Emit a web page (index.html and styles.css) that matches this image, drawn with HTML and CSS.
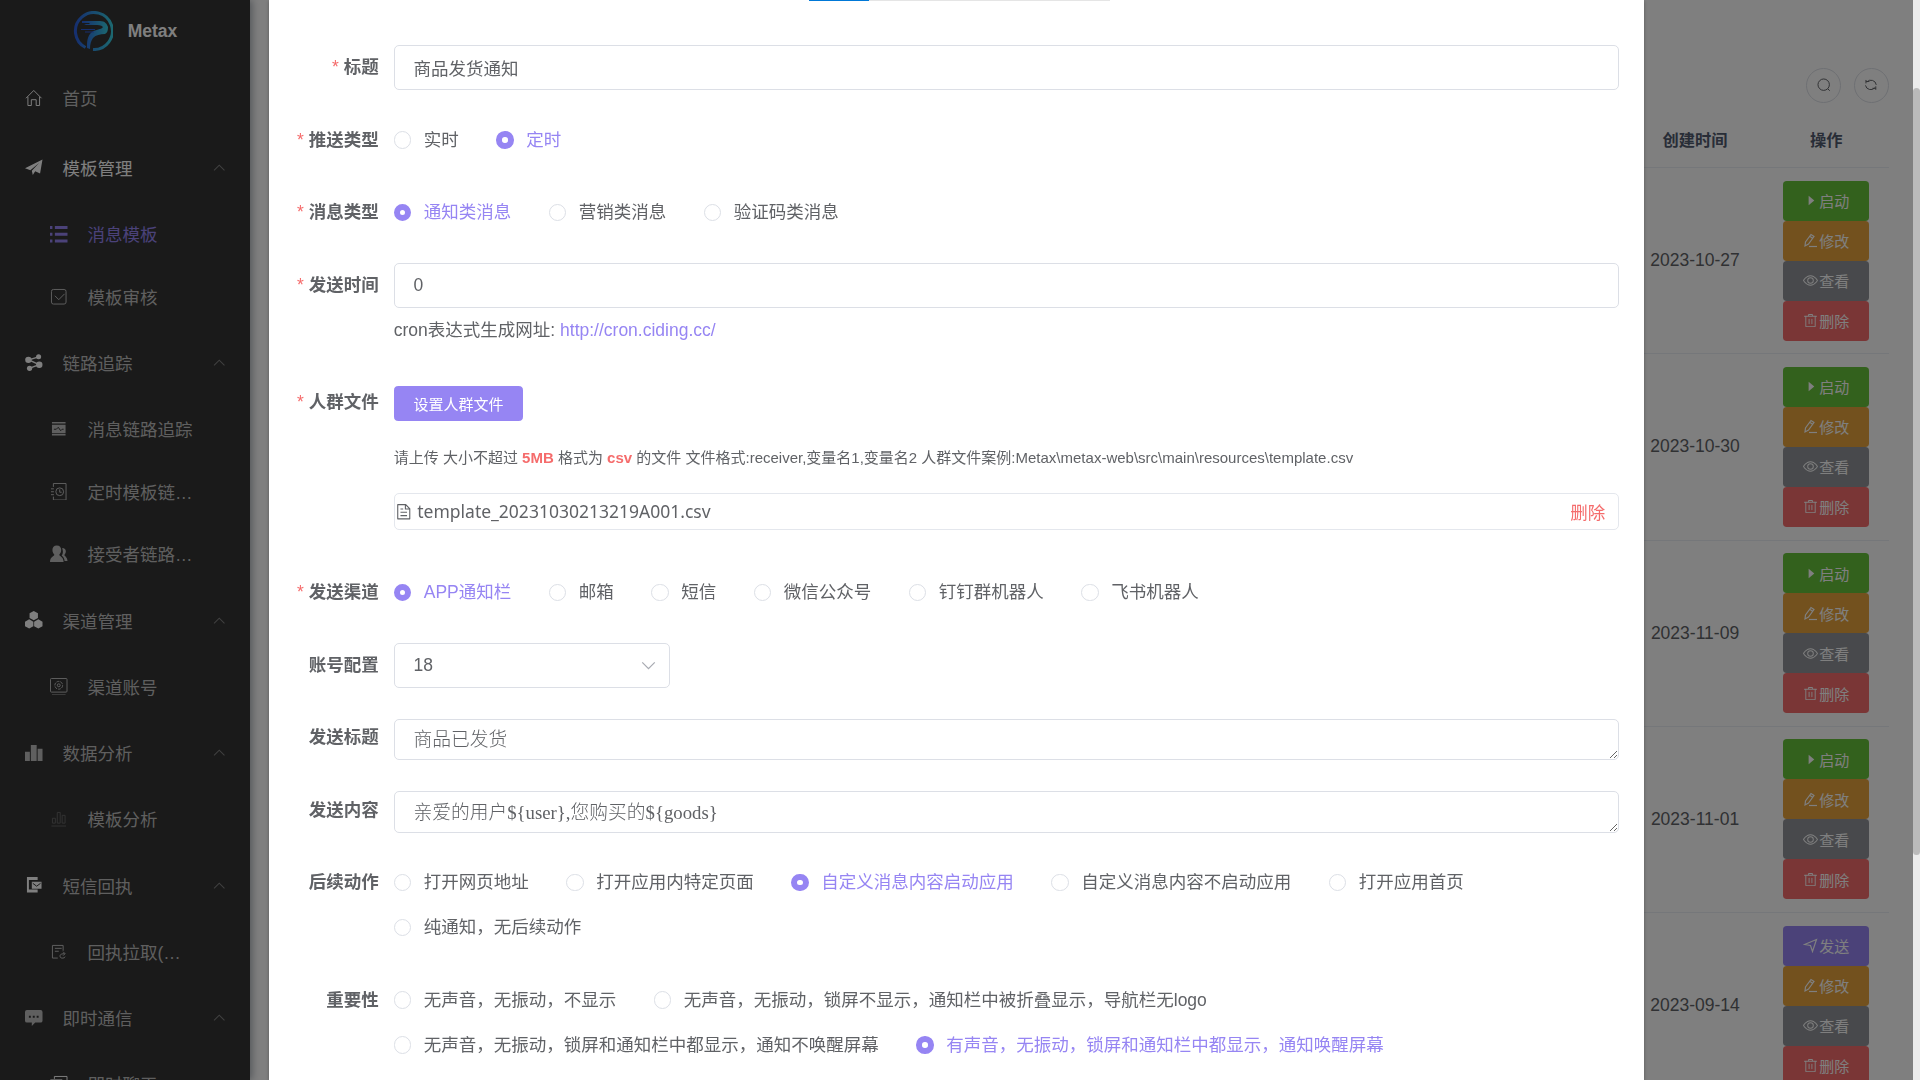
FILE: index.html
```html
<!DOCTYPE html>
<html lang="zh-CN">
<head>
<meta charset="utf-8">
<title>Metax</title>
<link rel="stylesheet" href="styles.css">
</head>
<body>
<svg class="sprite" aria-hidden="true">
  <symbol id="i-up" viewBox="0 0 12 12"><path d="M1 9l5-5 5 5" fill="none" stroke="currentColor"/></symbol>
  <symbol id="i-down" viewBox="0 0 12 12"><path d="M1 3.500l5 5 5-5" fill="none" stroke="currentColor"/></symbol>
  <symbol id="i-play" viewBox="0 0 1024 1024"><path fill="currentColor" d="M384 192v640l384-320.064z"/></symbol>
  <symbol id="i-edit" viewBox="0 0 15 15"><g fill="none" stroke="currentColor" stroke-width="1.200"><path d="M2 13l.5-4L8 1.500l3 2L5.500 11 2 13zM7 3.500l3 2"/><path d="M6 13.500h8"/></g></symbol>
  <symbol id="i-view" viewBox="0 0 1024 1024"><path fill="currentColor" d="M512 160c320 0 512 352 512 352S832 864 512 864 0 512 0 512s192-352 512-352zm0 64c-225 0-384 208-436 288 52 80 211 288 436 288 225 0 384-208 436-288-52-80-211-288-436-288zm0 64a224 224 0 1 1 0 448 224 224 0 0 1 0-448zm0 64a160 160 0 1 0 0 320 160 160 0 0 0 0-320z"/></symbol>
  <symbol id="i-del" viewBox="0 0 1024 1024"><path fill="currentColor" d="M160 256H96a32 32 0 0 1 0-64h256V95.900a32 32 0 0 1 32-32h256a32 32 0 0 1 32 32V192h256a32 32 0 1 1 0 64h-64v672a32 32 0 0 1-32 32H192a32 32 0 0 1-32-32V256zm448-64v-64H416v64h192zM224 896h576V256H224v640zm192-128a32 32 0 0 1-32-32V416a32 32 0 0 1 64 0v320a32 32 0 0 1-32 32zm192 0a32 32 0 0 1-32-32V416a32 32 0 0 1 64 0v320a32 32 0 0 1-32 32z"/></symbol>
  <symbol id="i-send" viewBox="0 0 15 15"><path d="M1.500 6.500L13.500 1.500 9.500 13.500 7.500 7.500z" fill="none" stroke="currentColor" stroke-width="1.200"/></symbol>
  <symbol id="i-doc" viewBox="0 0 1024 1024"><path fill="currentColor" d="M832 384H576V128H192v768h640V384zm-26.500-64L640 154.500V320h165.500zM160 64h480l256 256v608a32 32 0 0 1-32 32H160a32 32 0 0 1-32-32V96a32 32 0 0 1 32-32zm160 448h384v64H320v-64zm0-192h160v64H320v-64zm0 384h384v64H320v-64z"/></symbol>
</svg>

<div class="app">
  <aside class="sidebar">
    <div class="brand">
      <svg class="brand-logo" viewBox="0 0 40 40">
        <defs><linearGradient id="lg" x1="0" y1="0" x2="1" y2="0"><stop offset="0" stop-color="#2c5fe0"/><stop offset="1" stop-color="#38cfe0"/></linearGradient></defs>
        <path d="M12.500 36.500A18.500 18.500 0 1 1 20 38.500" fill="none" stroke="url(#lg)" stroke-width="3"/>
        <path d="M9 10h18c5 0 7 3 8 6 0 4-1 6-3 7-5 0-9 1-12 4-2 3-3 6-3 11l-3-1c0-6 0-12 5-16 4-3 9-2 11-5-2-2-5-2-8-2h-9l-2-1h6l-1-1H9z" fill="url(#lg)"/>
        <path d="M8 18.500h14M12 21h9" stroke="#2c5fe0"/>
      </svg>
      <span>Metax</span>
    </div>
    <nav>
      <a class="item bright-icon" href="#"><svg viewBox="0 0 18 18"><path d="M1 9.500l8-8 8 8M3 8v9h3.500v-6h5v6H15V8" fill="none" stroke="currentColor"/></svg><span>首页</span></a>
      <a class="item open" href="#"><svg viewBox="0 0 18 18"><path d="M0 9.500L18 .5 15.500 15l-5-2.500L8 16.500 7 12 14.500 4 5.500 11.500z" fill="currentColor"/></svg><span>模板管理</span><svg class="arrow"><use href="#i-up"/></svg></a>
      <a class="item sub active" href="#"><svg viewBox="0 0 18 18"><path d="M0 1h2.500v3H0zM5 1h13v3H5zM0 8h2.500v3H0zM5 8h13v3H5zM0 15h2.500v3H0zM5 15h13v3H5z" fill="currentColor"/></svg><span>消息模板</span></a>
      <a class="item sub" href="#"><svg viewBox="0 0 18 18"><g fill="none" stroke="currentColor"><rect x="1.500" y="1.500" width="15" height="15" rx="2"/><path d="M5 8l4 4 6-6"/></g></svg><span>模板审核</span></a>

      <a class="item bright-icon" href="#"><svg viewBox="0 0 18 18"><g fill="currentColor"><circle cx="3.500" cy="6" r="3.300"/><circle cx="14" cy="2.800" r="2.600"/><circle cx="14.700" cy="11" r="3.300"/><circle cx="4.700" cy="14.700" r="2.700"/></g><path d="M14 3L4 6l10.500 5L5 14.500" fill="none" stroke="currentColor" stroke-width="1.500"/></svg><span>链路追踪</span><svg class="arrow"><use href="#i-up"/></svg></a>
      <a class="item sub" href="#"><svg viewBox="0 0 18 18"><path d="M2 2h14v1.500H2zM2 5h14v8.500H2zM2 14.500h14V16H2z" fill="currentColor"/><path d="M4 9.500h2.500l2-2 2.500 3.500 1.500-1.500H14" fill="none" stroke="#333"/></svg><span>消息链路追踪</span></a>
      <a class="item sub" href="#"><svg viewBox="0 0 18 18"><g fill="none" stroke="currentColor"><path d="M3.500 4V.5h13v17h-13V14M1 6h3M1 9h3M1 12h3"/><circle cx="10" cy="9" r="4"/><path d="M10 6.500V9.500h2"/></g></svg><span>定时模板链…</span></a>
      <a class="item sub" href="#"><svg viewBox="0 0 18 18"><g fill="currentColor"><path d="M7 .5c3 0 4.500 2 4.500 4.500S10.500 9 9.500 10c0 1.500 4.500 2 4.500 7.500H0C0 12 4.500 11.500 4.500 10 3.500 9 2.500 7.500 2.500 5S4 .5 7 .5z"/><path d="M12.500 3c2.500 0 3.800 1.500 3.800 3.500s-1 3-1.500 3.800c0 1.200 3.200 2 3.200 6.200h-3c0-3-1.500-4.500-3-5.500 1-1.500 2-4 .5-8z"/></g></svg><span>接受者链路…</span></a>

      <a class="item bright-icon" href="#"><svg viewBox="0 0 18 18"><path d="M9 0l4.300 2.300v5L9 9.500 4.700 7.300v-5zM4.300 8.500L8.600 11v4.800L4.300 18 0 15.800V11zM13.700 8.500L18 11v4.800L13.700 18l-4.300-2.200V11z" fill="currentColor"/></svg><span>渠道管理</span><svg class="arrow"><use href="#i-up"/></svg></a>
      <a class="item sub" href="#"><svg viewBox="0 0 18 18"><g fill="none" stroke="currentColor"><rect x=".5" y=".5" width="17" height="14" rx="1"/><path d="M2 17.500h14"/><circle cx="9" cy="7.500" r="4" stroke-dasharray="3 1"/><circle cx="9" cy="7.500" r="1.500"/></g></svg><span>渠道账号</span></a>

      <a class="item" href="#"><svg viewBox="0 0 18 18"><path d="M0 8h5v10H0zM6 1h6v17H6zM13 5h5v13h-5z" fill="currentColor"/></svg><span>数据分析</span><svg class="arrow"><use href="#i-up"/></svg></a>
      <a class="item sub dim-icon" href="#"><svg viewBox="0 0 18 18"><path d="M2.500 8.500h3v5h-3zM7.500 2.500h3v11h-3zM12.500 5.500h3v8h-3zM1.500 16.500h15" fill="none" stroke="currentColor"/></svg><span>模板分析</span></a>

      <a class="item bright-icon" href="#"><svg viewBox="0 0 18 18"><path d="M2 1h11v3H4v10h9v3H2zM7 6h10v7H7z" fill="currentColor"/><path d="M8 7.500l4 3 4-3" fill="none" stroke="#333"/></svg><span>短信回执</span><svg class="arrow"><use href="#i-up"/></svg></a>
      <a class="item sub" href="#"><svg viewBox="0 0 18 18"><path d="M8 15.500H2.500v-13h11V8M5 5.500h7M5 8.500h4M13.500 9l2 2-2 2M15 11c-5 0-5 2-4.500 3.500s5 1.500 5-.5" fill="none" stroke="currentColor"/></svg><span>回执拉取(…</span></a>

      <a class="item" href="#"><svg viewBox="0 0 18 18"><path d="M2 1h14q2 0 2 2v9q0 2-2 2h-5.500L7 17.500V14H2q-2 0-2-2V3q0-2 2-2z" fill="currentColor"/><path d="M4 7h2v2H4zM8 7h2v2H8zM12 7h2v2h-2z" fill="#333"/></svg><span>即时通信</span><svg class="arrow"><use href="#i-up"/></svg></a>
      <a class="item sub bright-icon" href="#"><svg viewBox="0 0 18 18"><path d="M4.500 4V1.500h13v11H14M.5 5h12v11H.5z" fill="none" stroke="currentColor"/></svg><span>即时聊天</span></a>
    </nav>
  </aside>

  <main class="main">
    <div class="toolbar">
      <button class="round" type="button" aria-label="搜索"><svg viewBox="0 0 14 14"><g fill="none" stroke="currentColor"><circle cx="6.800" cy="6.800" r="5.800"/><path d="M11 11l2 2"/></g></svg></button>
      <button class="round" type="button" aria-label="刷新"><svg viewBox="0 0 14 14"><path d="M2 5.500V2M2 3.500h3.500M3 4a5.500 5.500 0 0 1 9.500 3M12 8.500V12M12 10.500H8.500M11 10A5.500 5.500 0 0 1 1.500 7.500" fill="none" stroke="currentColor"/></svg></button>
    </div>
    <table class="table">
      <colgroup><col class="col-date"><col class="col-ops"></colgroup>
      <thead><tr><th>创建时间</th><th>操作</th></tr></thead>
      <tbody>
        <tr><td>2023-10-27</td><td><div class="ops"><button class="op green" type="button"><svg><use href="#i-play"/></svg>启动</button><button class="op orange" type="button"><svg><use href="#i-edit"/></svg>修改</button><button class="op gray" type="button"><svg><use href="#i-view"/></svg>查看</button><button class="op red" type="button"><svg><use href="#i-del"/></svg>删除</button></div></td></tr>
        <tr><td>2023-10-30</td><td><div class="ops"><button class="op green" type="button"><svg><use href="#i-play"/></svg>启动</button><button class="op orange" type="button"><svg><use href="#i-edit"/></svg>修改</button><button class="op gray" type="button"><svg><use href="#i-view"/></svg>查看</button><button class="op red" type="button"><svg><use href="#i-del"/></svg>删除</button></div></td></tr>
        <tr><td>2023-11-09</td><td><div class="ops"><button class="op green" type="button"><svg><use href="#i-play"/></svg>启动</button><button class="op orange" type="button"><svg><use href="#i-edit"/></svg>修改</button><button class="op gray" type="button"><svg><use href="#i-view"/></svg>查看</button><button class="op red" type="button"><svg><use href="#i-del"/></svg>删除</button></div></td></tr>
        <tr><td>2023-11-01</td><td><div class="ops"><button class="op green" type="button"><svg><use href="#i-play"/></svg>启动</button><button class="op orange" type="button"><svg><use href="#i-edit"/></svg>修改</button><button class="op gray" type="button"><svg><use href="#i-view"/></svg>查看</button><button class="op red" type="button"><svg><use href="#i-del"/></svg>删除</button></div></td></tr>
        <tr><td>2023-09-14</td><td><div class="ops"><button class="op purple" type="button"><svg><use href="#i-send"/></svg>发送</button><button class="op orange" type="button"><svg><use href="#i-edit"/></svg>修改</button><button class="op gray" type="button"><svg><use href="#i-view"/></svg>查看</button><button class="op red" type="button"><svg><use href="#i-del"/></svg>删除</button></div></td></tr>
      </tbody>
    </table>
  </main>
</div>

<div class="overlay">
  <div class="overlay-body">
    <form class="dialog" role="dialog" aria-label="消息模板">
      <div class="progress"><div class="progress-track"><div class="progress-bar"></div></div></div>

      <div class="row">
        <label class="label required" for="title">标题</label>
        <div class="field"><input class="input" id="title" type="text" value="商品发货通知"></div>
      </div>
      <div class="row" role="radiogroup" aria-labelledby="l-push">
        <span class="label required" id="l-push">推送类型</span>
        <div class="field radios">
          <label class="radio"><input type="radio" name="push"><span>实时</span></label>
          <label class="radio"><input type="radio" name="push" checked><span>定时</span></label>
        </div>
      </div>
      <div class="row" role="radiogroup" aria-labelledby="l-msg">
        <span class="label required" id="l-msg">消息类型</span>
        <div class="field radios">
          <label class="radio"><input type="radio" name="msg" checked><span>通知类消息</span></label>
          <label class="radio"><input type="radio" name="msg"><span>营销类消息</span></label>
          <label class="radio"><input type="radio" name="msg"><span>验证码类消息</span></label>
        </div>
      </div>
      <div class="row">
        <label class="label required" for="time">发送时间</label>
        <div class="field">
          <input class="input" id="time" type="text" value="0">
          <div class="tip">cron表达式生成网址: <a href="http://cron.ciding.cc/">http://cron.ciding.cc/</a></div>
        </div>
      </div>
      <div class="row">
        <span class="label required">人群文件</span>
        <div class="field upload">
          <button class="primary" type="button">设置人群文件</button>
          <p class="hint">请上传 大小不超过 <b>5MB</b> 格式为 <b>csv</b> 的文件 文件格式:receiver,变量名1,变量名2 人群文件案例:Metax\metax-web\src\main\resources\template.csv</p>
          <div class="file"><svg><use href="#i-doc"/></svg><span class="file-name">template_20231030213219A001.csv</span><a class="file-del" href="#">删除</a></div>
        </div>
      </div>
      <div class="row" role="radiogroup" aria-labelledby="l-chan">
        <span class="label required" id="l-chan">发送渠道</span>
        <div class="field radios">
          <label class="radio"><input type="radio" name="chan" checked><span>APP通知栏</span></label>
          <label class="radio"><input type="radio" name="chan"><span>邮箱</span></label>
          <label class="radio"><input type="radio" name="chan"><span>短信</span></label>
          <label class="radio"><input type="radio" name="chan"><span>微信公众号</span></label>
          <label class="radio"><input type="radio" name="chan"><span>钉钉群机器人</span></label>
          <label class="radio"><input type="radio" name="chan"><span>飞书机器人</span></label>
        </div>
      </div>
      <div class="row">
        <label class="label" for="account">账号配置</label>
        <div class="field"><div class="select"><select class="input" id="account"><option>18</option></select><svg><use href="#i-down"/></svg></div></div>
      </div>
      <div class="row">
        <label class="label" for="send-title">发送标题</label>
        <div class="field area"><textarea id="send-title" rows="1">商品已发货</textarea></div>
      </div>
      <div class="row">
        <label class="label" for="send-body">发送内容</label>
        <div class="field area"><textarea id="send-body" rows="1">亲爱的用户${user},您购买的${goods}</textarea></div>
      </div>
      <div class="row" role="radiogroup" aria-labelledby="l-act">
        <span class="label" id="l-act">后续动作</span>
        <div class="field radios">
          <label class="radio"><input type="radio" name="act"><span>打开网页地址</span></label>
          <label class="radio"><input type="radio" name="act"><span>打开应用内特定页面</span></label>
          <label class="radio"><input type="radio" name="act" checked><span>自定义消息内容启动应用</span></label>
          <label class="radio"><input type="radio" name="act"><span>自定义消息内容不启动应用</span></label>
          <label class="radio"><input type="radio" name="act"><span>打开应用首页</span></label>
          <label class="radio"><input type="radio" name="act"><span>纯通知，无后续动作</span></label>
        </div>
      </div>
      <div class="row" role="radiogroup" aria-labelledby="l-imp">
        <span class="label" id="l-imp">重要性</span>
        <div class="field radios">
          <label class="radio"><input type="radio" name="imp"><span>无声音，无振动，不显示</span></label>
          <label class="radio"><input type="radio" name="imp"><span>无声音，无振动，锁屏不显示，通知栏中被折叠显示，导航栏无logo</span></label>
          <label class="radio"><input type="radio" name="imp"><span>无声音，无振动，锁屏和通知栏中都显示，通知不唤醒屏幕</span></label>
          <label class="radio"><input type="radio" name="imp" checked><span>有声音，无振动，锁屏和通知栏中都显示，通知唤醒屏幕</span></label>
        </div>
      </div>
    </form>
  </div>
  <div class="scrollbar"><div class="thumb"></div></div>
</div>
</body>
</html>
```

FILE: styles.css
```css
:root {
  --primary: #9685f3;
  --text: #606266;
  --line: #dcdfe6;
  --danger: #f56c6c;
}

* { box-sizing: border-box; }

html { height: 100%; overflow: hidden; }

body {
  zoom: 1.25;
  height: 100%;
  margin: 0;
  overflow: hidden;
  font-family: "Liberation Sans", "Noto Sans CJK SC", sans-serif;
  font-size: 14px;
  color: var(--text);
  background: #fff;
}

button, input, select { font: inherit; }
a { color: inherit; text-decoration: none; }
svg { display: block; flex: none; }
.sprite { display: none; }

/* page behind the dialog */
.app { display: flex; height: 100%; overflow: hidden; }

.sidebar {
  flex: none;
  width: 200px;
  overflow: hidden;
  background: #343434;
  color: #bfbfbf;
  box-shadow: 2px 0 6px rgba(0, 21, 41, .35);
}

.brand {
  display: flex;
  align-items: center;
  justify-content: center;
  gap: 12px;
  height: 50px;
  color: #fff;
  font-weight: bold;
}
.brand-logo { width: 32px; height: 32px; }

.item {
  display: flex;
  align-items: center;
  gap: 16px;
  height: 56px;
  padding: 0 20px;
}
.item svg { width: 14px; height: 14px; }
.item .arrow { width: 10px; height: 10px; margin-left: auto; color: #808080; }
.item.open { color: #fff; }
.item.sub { height: 50px; padding-left: 40px; }
.item.active { color: var(--primary); }
.item.bright-icon svg:first-child { color: #fff; }
.item.dim-icon svg { color: #666; }

.main { flex: 1; padding: 54px 25px 0 20px; }

.toolbar { display: flex; justify-content: flex-end; gap: 10px; margin-bottom: 6px; }
.round {
  display: grid;
  place-items: center;
  width: 28px;
  height: 28px;
  padding: 0;
  border: 1px solid var(--line);
  border-radius: 50%;
  background: #fff;
  color: var(--text);
}
.round svg { width: 11px; height: 11px; }

.table { margin-left: auto; border-collapse: collapse; table-layout: fixed; width: 210px; text-align: center; }
.col-date { width: 110px; }
.col-ops { width: 100px; }
.table th { height: 46px; padding: 0; border-bottom: 1px solid #ebeef5; font-size: 13px; color: #515a6e; }
.table td { height: 149px; padding: 0; border-bottom: 1px solid #ebeef5; }

.ops { display: flex; flex-direction: column; align-items: center; }
.op {
  display: flex;
  align-items: center;
  justify-content: center;
  gap: 1px;
  height: 32px;
  padding: 0 15px;
  border: 1px solid transparent;
  border-radius: 3px;
  color: #fff;
  font-size: 12px;
}
.op svg { width: 12px; height: 12px; }
.green { background: #67c23a; }
.orange { background: #e6a23c; }
.gray { background: #909399; }
.red { background: #f56c6c; }
.purple { background: var(--primary); }

/* dialog */
.overlay { position: fixed; inset: 0; display: flex; overflow: hidden; background: rgba(0, 0, 0, .5); }
.overlay-body { flex: 1; overflow: hidden; }
.dialog {
  width: 1100px;
  max-width: 100%;
  min-height: 100%;
  margin: 0 auto;
  padding: 0 20px;
  background: #fff;
  box-shadow: 0 1px 3px rgba(0, 0, 0, .3);
}

.progress { display: flex; justify-content: center; padding: 0 0 35px 5px; }
.progress-track { width: 241px; height: 1px; background: #e5e5e5; }
.progress-bar { width: 20%; height: 1px; background: #0078d7; }

.row { display: flex; align-items: flex-start; margin-bottom: 22px; }
.label {
  flex: none;
  width: 80px;
  padding-right: 12px;
  line-height: 36px;
  text-align: right;
  font-weight: bold;
  white-space: nowrap;
}
.required::before { content: "*"; margin-right: 4px; color: var(--danger); font-weight: normal; }
.field { flex: 1; min-width: 0; }

.input {
  display: block;
  width: 100%;
  height: 36px;
  padding: 0 15px;
  border: 1px solid var(--line);
  border-radius: 4px;
  background: #fff;
  color: var(--text);
}

.radios { display: flex; flex-wrap: wrap; column-gap: 30px; }
.radio { display: flex; align-items: center; gap: 10px; height: 36px; line-height: 36px; white-space: nowrap; }
.radio input {
  appearance: none;
  flex: none;
  width: 14px;
  height: 14px;
  margin: 0;
  border: 1px solid var(--line);
  border-radius: 50%;
  background: #fff;
}
.radio input:checked { border: 5px solid var(--primary); }
.radio input:checked + span { color: var(--primary); }

.tip { line-height: 36px; height: 36px; }
.tip a { color: var(--primary); }

.upload { padding: 5px 0 10px; }
.primary {
  display: block;
  height: 28px;
  padding: 0 15px;
  border: 1px solid var(--primary);
  border-radius: 3px;
  background: var(--primary);
  color: #fff;
  font-size: 12px;
}
.hint { margin: 19px 0 18px; font-size: 12px; line-height: 20px; }
.hint b { color: var(--danger); }
.file {
  display: flex;
  align-items: center;
  height: 30px;
  padding-right: 10px;
  border: 1px solid #e4e7ed;
  border-radius: 4px;
}
.file svg { width: 14px; height: 14px; }
.file-name { flex: 1; padding-left: 4px; font-family: "Noto Sans", sans-serif; }
.file-del { color: var(--danger); }

.select { display: grid; align-items: center; width: 221px; }
.select select, .select svg { grid-area: 1 / 1; }
.select select { appearance: none; }
.select svg { justify-self: end; width: 12px; height: 12px; margin-right: 11px; color: #a8abb2; pointer-events: none; }

.area { padding-top: 3px; }
.area textarea {
  display: block;
  width: 100%;
  height: 33px;
  padding: 6px 15px 4px;
  border: 1px solid var(--line);
  border-radius: 4px;
  overflow: hidden;
  color: var(--text);
  font-family: "Liberation Serif", "Noto Sans CJK SC", serif;
  font-size: 15px;
  font-weight: 300;
  line-height: 21px;
  resize: vertical;
}

.scrollbar { flex: none; width: 6px; padding-top: 70px; background: #ebebeb; }
.thumb { height: 614px; border-radius: 3px; background: #bababa; }
```
